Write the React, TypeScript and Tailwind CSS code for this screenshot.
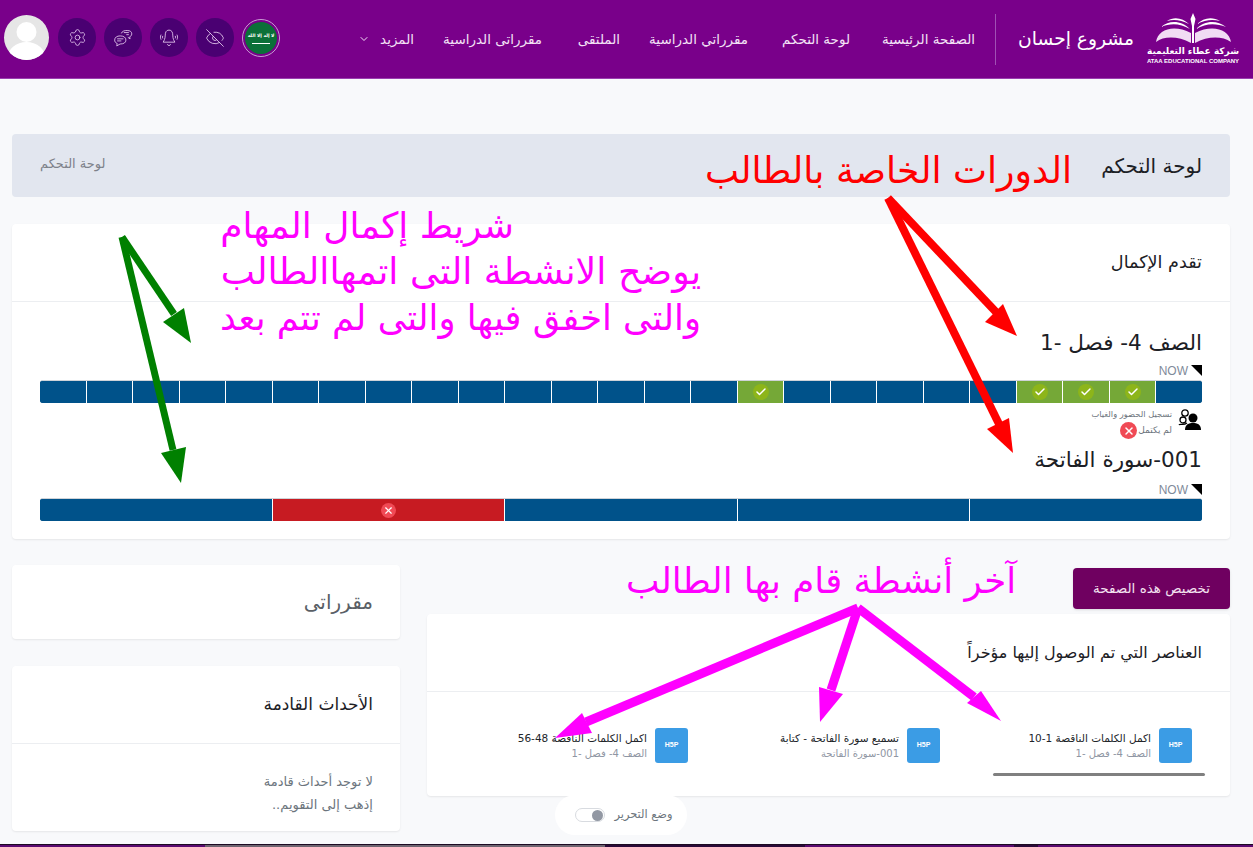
import { ChevronDown, Check, EyeOff, Settings, X } from "lucide-react";

const arabic = "font-['DejaVu_Sans',sans-serif]";

const navItems = [
  { label: "الصفحة الرئيسية", width: "w-[94px]" },
  { label: "لوحة التحكم", width: "w-[71px]" },
  { label: "مقرراتي الدراسية", width: "w-[97px]" },
  { label: "الملتقى", width: "w-[47px]" },
  { label: "مقرراتى الدراسية", width: "w-[97px]" },
];

function Logo() {
  return (
    <div className="flex w-[94px] flex-col items-center">
      <svg viewBox="0 0 94 30" className="h-[30px] w-[94px]" fill="#fff">
        <path d="M47 0 L49.5 6 L48 13 L48 30 L46 30 L46 13 L44.5 6 Z" />
        <path d="M10 29 C12 16 28 11 45 20 L45 30 C32 23 18 23 10 29 Z" fill="#f1dcf4" />
        <path d="M85 29 C83 16 66 11 49 20 L49 30 C62 23 76 23 85 29 Z" fill="#f1dcf4" />
        <path d="M15 14 C24 6 36 8 44 16 C34 10 24 10 15 14 Z" />
        <path d="M80 14 C70 6 58 8 50 16 C60 10 70 10 80 14 Z" />
        <path d="M21 8 C28 3 37 5 43 11 C35 7 28 6 21 8 Z" />
        <path d="M74 8 C66 3 57 5 51 11 C59 7 66 6 74 8 Z" />
      </svg>
      <div className="mt-[2px] text-[9px] leading-[12px] font-bold whitespace-nowrap text-white">شركة عطاء التعليمية</div>
      <div dir="ltr" className="font-['Liberation_Sans',sans-serif] text-[6px] leading-[8px] font-bold whitespace-nowrap text-white">
        ATAA EDUCATIONAL COMPANY
      </div>
    </div>
  );
}

function IconCircle({ children }: { children: React.ReactNode }) {
  return (
    <div className="flex h-[39px] w-[38px] items-center justify-center rounded-full bg-[#4a0072] text-[#e9d0f2]">
      {children}
    </div>
  );
}

function Header() {
  return (
    <header dir="rtl" className={`flex h-[79px] items-center border-b border-[#9a3fb0] bg-[#79008a] pr-[13px] pl-1 text-white ${arabic}`}>
      <Logo />
      <div className="mr-[12px] text-[18.7px] whitespace-nowrap">مشروع إحسان</div>
      <div className="mr-[22px] h-[51px] w-px bg-[#a050b4]" />
      <nav className="mr-[20px] flex items-center gap-[31px] text-[#f3e2f6]">
        {navItems.map((item) => (
          <a key={item.label} className={`${item.width} text-[13.5px] whitespace-nowrap`}>
            {item.label}
          </a>
        ))}
        <a className="flex items-center gap-[10px] text-[13.5px]">
          المزيد
          <ChevronDown size={12} />
        </a>
      </nav>
      <div dir="ltr" className="mr-auto -mt-[3px] flex items-center gap-[8px]">
        <div className="mr-[1px] h-[45px] w-[45px] overflow-hidden rounded-full bg-[#e6e6e6]">
          <svg viewBox="0 0 45 45" className="h-[45px] w-[45px]" fill="#fff">
            <circle cx="22.5" cy="17" r="10" />
            <ellipse cx="22.5" cy="43" rx="19" ry="16" />
          </svg>
        </div>
        <IconCircle>
          <Settings size={19} strokeWidth={1} />
        </IconCircle>
        <IconCircle>
          <svg viewBox="0 0 24 24" width="20" height="20" fill="none" stroke="currentColor" strokeWidth="1">
            <path d="M10 6.5 C11 3.5 14 3 17 3 C20.5 3 22.5 4.5 22.5 7 C22.5 9 21.3 10 20 10.6 L20.5 13 L17.8 11.2" />
            <path d="M2 14.5 C2 11 5 9.5 8.5 9.5 C12.5 9.5 15.5 11 15.5 14.5 C15.5 17.8 12.5 19.2 8.5 19.2 L4.5 21.5 L5 18.5 C3 17.8 2 16.4 2 14.5 Z" />
            <path d="M5 13 H12.5 M5 15.5 H10 M13 5.5 H19 M16 8 H19" />
          </svg>
        </IconCircle>
        <IconCircle>
          <svg viewBox="0 0 24 24" width="20" height="20" fill="none" stroke="currentColor" strokeWidth="1">
            <path d="M12 2.5 C8.5 2.5 7.5 5.5 7.5 8.5 C7.5 13 6 15 5 17 H19 C18 15 16.5 13 16.5 8.5 C16.5 5.5 15.5 2.5 12 2.5 Z" />
            <path d="M10 19.5 C10.5 21.5 13.5 21.5 14 19.5 M2.5 8 C1.5 10 1.5 12 2.5 14 M21.5 8 C22.5 10 22.5 12 21.5 14 M4.5 9.5 C4 10.5 4 11.5 4.5 12.5 M19.5 9.5 C20 10.5 20 11.5 19.5 12.5" />
          </svg>
        </IconCircle>
        <IconCircle>
          <EyeOff size={20} strokeWidth={1} />
        </IconCircle>
        <div className="flex h-[38px] w-[38px] items-center justify-center rounded-full border border-[#c99bd4] p-[2px]">
          <div dir="rtl" className="flex h-full w-full flex-col items-center justify-center rounded-full bg-[#0b7038]">
            <span className="text-[4.5px] leading-[8px] font-bold whitespace-nowrap text-white">لا إله إلا الله</span>
            <span className="mt-[3px] h-px w-[18px] bg-white" />
          </div>
        </div>
      </div>
    </header>
  );
}

function Bar({ states }: { states: ("todo" | "done" | "fail")[] }) {
  return (
    <div className="flex h-[23px] overflow-hidden rounded-[3px] border-t border-[#cfd3d8] bg-[#00528a]">
      {states.map((s, i) => (
        <div
          key={i}
          className={`flex flex-1 items-center justify-center border-r border-white first:border-r-0 ${
            s === "done" ? "bg-[#75a837]" : s === "fail" ? "bg-[#c71b22]" : "bg-[#00528a]"
          }`}
        >
          {s === "done" && (
            <span className="flex h-[16px] w-[16px] items-center justify-center rounded-full bg-[#8db51a]">
              <Check size={12} strokeWidth={3} className="text-white" />
            </span>
          )}
          {s === "fail" && (
            <span className="flex h-[15px] w-[15px] items-center justify-center rounded-full bg-[#f04a55]">
              <X size={11} strokeWidth={2.5} className="text-white" />
            </span>
          )}
        </div>
      ))}
    </div>
  );
}

function NowMark() {
  return (
    <div className="flex h-[11px] items-center gap-[3px]">
      <span className="h-0 w-0 border-t-[11px] border-l-[11px] border-t-black border-l-transparent" />
      <span dir="ltr" className="font-['Liberation_Sans',sans-serif] text-[12px] leading-none text-[#7f8a9a]">NOW</span>
    </div>
  );
}

function Activity({ title, course, underline }: { title: string; course: string; underline?: boolean }) {
  return (
    <div className="w-[212px]">
      <div className="flex items-center gap-[8px]">
        <div className="flex h-[35px] w-[33px] shrink-0 items-center justify-center rounded-[3px] bg-[#3b9ce5]">
          <span dir="ltr" className="font-['Liberation_Sans',sans-serif] text-[7px] font-bold text-white">H5P</span>
        </div>
        <div className="min-w-0">
          <div className="text-[10.5px] leading-[16px] whitespace-nowrap text-[#212529]">{title}</div>
          <div className="text-[10px] leading-[16px] whitespace-nowrap text-[#8f96a3]">{course}</div>
        </div>
      </div>
      {underline && <div className="mt-[10px] -mr-[13px] h-[3px] w-[212px] rounded bg-[#808080]" />}
    </div>
  );
}

// annotations drawn on top of the screenshot
function Arrows() {
  return (
    <svg className="pointer-events-none absolute inset-0 h-[847px] w-[1253px]" viewBox="0 0 1253 847">
      <g stroke="#ff0000" strokeWidth="8" fill="#ff0000">
        <path d="M888 198 L996 312" fill="none" />
        <path d="M888 198 L999 424" fill="none" />
        <polygon stroke="none" points="1017,336 985,322 1003,304" />
        <polygon stroke="none" points="1013,453 987,429 1009,418" />
      </g>
      <g stroke="#008000" strokeWidth="7" fill="#008000">
        <path d="M122 237 L174 314" fill="none" />
        <path d="M122 237 L173 450" fill="none" />
        <polygon stroke="none" points="191,343 163,322 184,308" />
        <polygon stroke="none" points="181,483 161,453 186,447" />
      </g>
      <g stroke="#ff00ff" strokeWidth="9" fill="#ff00ff">
        <path d="M858 608 L586 722" fill="none" />
        <path d="M858 608 L831 690" fill="none" />
        <path d="M858 608 L974 697" fill="none" />
        <polygon stroke="none" points="555,738 582,713 592,733" />
        <polygon stroke="none" points="820,722 819,687 843,694" />
        <polygon stroke="none" points="1001,721 967,703 981,691" />
      </g>
    </svg>
  );
}

export default function App() {
  const bar1 = Array.from({ length: 25 }, (_, i) =>
    i === 1 || i === 2 || i === 3 || i === 9 ? ("done" as const) : ("todo" as const),
  );
  return (
    <div className={`relative h-[847px] w-[1253px] overflow-hidden bg-[#f8f9fb] ${arabic}`}>
      <Header />
      <main dir="rtl" className="pr-[23px] pl-[12px]">
        <div className="mt-[55px] flex h-[63px] items-center justify-between rounded-[4px] bg-[#e2e6ef] pr-[28px] pl-[28px]">
          <h1 className="text-[20px] text-[#1c2025]">لوحة التحكم</h1>
          <span className="-mt-[4px] text-[13px] text-[#7d818a]">لوحة التحكم</span>
        </div>

        <section className="mt-[27px] h-[315px] rounded-[4px] bg-white shadow-[0_1px_2px_rgba(0,0,0,0.08)]">
          <div className="flex h-[78px] items-center border-b border-[#eceef1] px-[28px] text-[17.6px] text-[#1c2025]">
            تقدم الإكمال
          </div>
          <div className="px-[28px] pt-[26px]">
            <h2 className="text-[21.5px] leading-[30px] text-[#1c2025]">الصف 4- فصل -1</h2>
            <div className="mt-[7px] mb-[4px]">
              <NowMark />
            </div>
            <Bar states={bar1} />
            <div className="mt-[4px] flex h-[34px] items-start gap-[6px]">
              <svg viewBox="0 0 24 24" width="24" height="24" className="mt-[1px] shrink-0">
                <circle cx="15" cy="10" r="4.5" fill="#000" />
                <path d="M7 22 C7 16 11 15 15 15 C19 15 23 16 23 22 Z" fill="#000" />
                <circle cx="7" cy="5" r="3.2" fill="#fff" stroke="#000" strokeWidth="1.3" />
                <circle cx="5" cy="12" r="3" fill="#fff" stroke="#000" strokeWidth="1.3" />
                <path d="M9 15 C5 18 2 15 1 17" fill="none" stroke="#000" strokeWidth="1.3" />
              </svg>
              <div className="text-[8.3px] text-[#6c757d]">
                <div className="leading-[15px] whitespace-nowrap">تسجيل الحضور والغياب</div>
                <div className="flex items-center gap-[1px] text-[9px] leading-[15px]">
                  لم يكتمل
                  <span className="flex h-[17px] w-[17px] items-center justify-center rounded-full bg-[#f04a55]">
                    <X size={12} strokeWidth={3} className="text-white" />
                  </span>
                </div>
              </div>
            </div>
            <h2 className="mt-[4px] text-[21.5px] leading-[30px] text-[#1c2025]">001-سورة الفاتحة</h2>
            <div className="mt-[9px] mb-[3px]">
              <NowMark />
            </div>
            <Bar states={["todo", "todo", "todo", "fail", "todo"]} />
          </div>
        </section>

        <div className="mt-[26px] flex gap-[27px]">
          <div className="flex-1">
            <div className="flex justify-start">
              <button className="mt-[3px] h-[41px] w-[157px] rounded-[4px] bg-[#6f0060] text-[13.5px] text-[#f3e2f0] shadow-sm">
                تخصيص هذه الصفحة
              </button>
            </div>
            <section className="mt-[5px] h-[182px] rounded-[4px] bg-white shadow-[0_1px_2px_rgba(0,0,0,0.08)]">
              <div className="flex h-[78px] items-center border-b border-[#eceef1] px-[28px] text-[16px] text-[#1c2025]">
                العناصر التي تم الوصول إليها مؤخراً
              </div>
              <div className="flex gap-[40px] px-[38px] pt-[36px]">
                <Activity title="اكمل الكلمات الناقصة 1-10" course="الصف 4- فصل -1" underline />
                <Activity title="تسميع سورة الفاتحة - كتابة" course="001-سورة الفاتحة" />
                <Activity title="اكمل الكلمات الناقصة 48-56" course="الصف 4- فصل -1" />
              </div>
            </section>
          </div>
          <aside className="w-[388px] shrink-0">
            <section className="flex h-[74px] items-center rounded-[4px] bg-white px-[27px] text-[20px] text-[#5a5f66] shadow-[0_1px_2px_rgba(0,0,0,0.08)]">
              مقرراتى
            </section>
            <section className="mt-[27px] h-[165px] rounded-[4px] bg-white shadow-[0_1px_2px_rgba(0,0,0,0.08)]">
              <div className="flex h-[78px] items-center border-b border-[#eceef1] px-[27px] text-[17px] text-[#1c2025]">
                الأحداث القادمة
              </div>
              <div className="px-[27px] pt-[26px] text-[13px] text-[#6c757d]">
                <div className="leading-[23px]">لا توجد أحداث قادمة</div>
                <div className="leading-[23px]">إذهب إلى التقويم..</div>
              </div>
            </section>
          </aside>
        </div>
      </main>

      <div dir="rtl" className="absolute top-[795px] left-[555px] flex h-[40px] w-[132px] items-center justify-center gap-[9px] rounded-full bg-white pl-[6px]">
        <span className="text-[11.4px] text-[#6c757d]">وضع التحرير</span>
        <span className="flex h-[14px] w-[30px] items-center justify-start rounded-full border border-[#d8dbe0] bg-white px-[1px]">
          <span className="h-[11px] w-[11px] rounded-full bg-[#9298a3]" />
        </span>
      </div>

      <div className="absolute right-0 bottom-0 left-0 flex h-[3px] border-t border-[#1c0a22] bg-[#5a0a70]">
        <div className="w-[205px]" />
        <div className="w-[400px] bg-[#6e6470]" />
        <div className="w-[200px] bg-[#2a0a38]" />
        <div className="w-[209px]" />
        <div className="w-[24px] bg-[#2a0a38]" />
      </div>

      <Arrows />
      <div dir="rtl" className="pointer-events-none absolute top-[145px] left-[705px] text-[36.2px] leading-[52px] whitespace-nowrap text-[#ff0000]">
        الدورات الخاصة بالطالب
      </div>
      <div dir="rtl" className="pointer-events-none absolute top-[203px] left-[221px] w-[480px] text-[36px] leading-[46px] whitespace-nowrap text-[#ff00ff]">
        <div className="pr-[187px]">شريط إكمال المهام</div>
        <div className="text-[36.3px]">يوضح الانشطة التى اتمهاالطالب</div>
        <div className="text-[35.4px]">والتى اخفق فيها والتى لم تتم بعد</div>
      </div>
      <div dir="rtl" className="pointer-events-none absolute top-[555px] left-[626px] text-[35.6px] leading-[52px] whitespace-nowrap text-[#ff00ff]">
        آخر أنشطة قام بها الطالب
      </div>
    </div>
  );
}
